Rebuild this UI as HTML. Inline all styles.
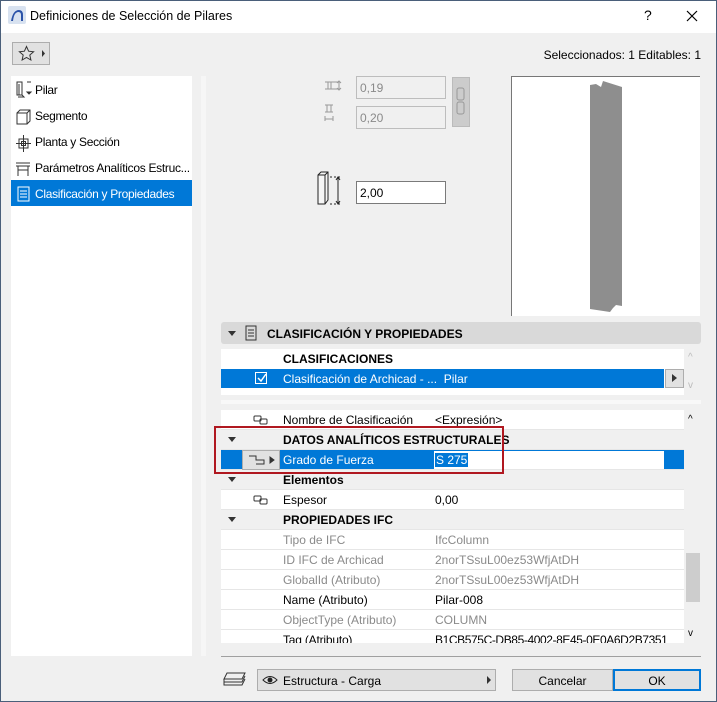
<!DOCTYPE html>
<html><head><meta charset="utf-8"><style>
*{box-sizing:border-box;margin:0;padding:0}
body{width:717px;height:702px;overflow:hidden;background:#f0f0f0;font-family:"Liberation Sans",sans-serif;font-size:12px;color:#000;position:relative}
.a{position:absolute}
.win{left:0;top:0;width:717px;height:702px;border:1px solid #4a5f7a}
.t{white-space:nowrap}
.row{position:absolute;left:221px;width:463px;height:20px;border-bottom:1px solid #e6e6e6;background:#fff}
.row .l{position:absolute;left:62px;top:3px}
.row .v{position:absolute;left:214px;top:3px}
.g{color:#8a8a8a}
.hdr{background:#f0f0f0;font-weight:bold}
.tri{position:absolute;left:7px;top:7px;width:0;height:0;border-left:4px solid transparent;border-right:4px solid transparent;border-top:5px solid #333}
.inp{position:absolute;height:23px;border:1px solid #bdbdbd;background:#f0f0f0;color:#8a8a8a;padding:4px 0 0 3px}
.item{position:absolute;left:11px;width:181px;height:26px;padding:7px 0 0 24px;letter-spacing:-0.3px;overflow:hidden}
</style></head><body>
<div class="a win"></div>
<div class="a" style="left:1px;top:1px;width:715px;height:32px;background:#fff"></div>
<svg class="a" style="left:8px;top:6px" width="18" height="18"><rect width="18" height="18" rx="2" fill="#d8e2f0"/><path d="M3 15 Q5 4 11 4 Q15 4 15 9 L15 15 L13 15 L13 9 Q13 6 10.5 6 Q6 6 5 15Z" fill="#2a52a8"/></svg>
<div class="a t" style="left:30px;top:9px;font-size:12.5px">Definiciones de Selección de Pilares</div>
<div class="a" style="left:644px;top:7px;font-size:14px">?</div>
<svg class="a" style="left:686px;top:10px" width="12" height="12"><path d="M1 1L11 11M11 1L1 11" stroke="#000" stroke-width="1.2"/></svg>
<div class="a" style="left:12px;top:42px;width:38px;height:23px;border:1px solid #adadad;background:#e1e1e1"></div>
<svg class="a" style="left:18px;top:45px" width="30" height="17"><path d="M8.5 1.5L10.6 6.2 15.6 6.7 11.8 10 12.9 15 8.5 12.4 4.1 15 5.2 10 1.4 6.7 6.4 6.2Z" fill="none" stroke="#333"/><path d="M24 5L27 8.5 24 12Z" fill="#333"/></svg>
<div class="a t" style="right:16px;top:48px">Seleccionados: 1 Editables: 1</div>

<div class="a" style="left:11px;top:76px;width:181px;height:580px;background:#fff"></div>
<div class="a" style="left:201px;top:76px;width:5px;height:580px;background:#f6f6f6"></div>
<div class="item t" style="top:76px">Pilar</div>
<div class="item t" style="top:102px">Segmento</div>
<div class="item t" style="top:128px">Planta y Sección</div>
<div class="item t" style="top:154px">Parámetros Analíticos Estruc...</div>
<div class="item t" style="top:180px;background:#0078d7;color:#fff">Clasificación y Propiedades</div>
<svg class="a" style="left:15px;top:80px" width="18" height="126" fill="none" stroke="#333">
<path d="M2 2H7V15H2ZM4 4V15M7 15L9 17H3"/><path d="M12 2H16M14 14L12 12H16Z" fill="#333"/>
<path d="M2 33H12V44H2ZM2 33L5 30H15V41L12 44M12 33L15 30"/>
<rect x="4" y="59" width="9" height="9"/><rect x="6.5" y="61.5" width="4" height="4"/><path d="M8.5 55V72M1 63.5H16"/>
<path d="M1 86H15M3 86V96M13 86V96M3 90H13M1 83H15"/>
<rect x="3" y="107" width="11" height="14" stroke="#fff"/><path d="M5 111H12M5 114H12M5 117H12" stroke="#fff"/>
</svg>

<svg class="a" style="left:322px;top:77px" width="30" height="50" fill="none" stroke="#999"><path d="M3 5H12M3 12H12M6 5V12M9 5V12M12 5H17M12 12H17"/><path d="M17 5V12M15 6L17 4 19 6M15 11L17 13 19 11"/><path d="M3 28H11M3 35H11M5 28V35M9 28V35M3 39V44M11 39V44M3 42H11"/></svg>
<div class="inp t" style="left:356px;top:76px;width:90px">0,19</div>
<div class="inp t" style="left:356px;top:106px;width:90px">0,20</div>
<div class="a" style="left:452px;top:77px;width:18px;height:50px;background:#ccc;border:1px solid #bbb"></div>
<svg class="a" style="left:456px;top:87px" width="10" height="30" fill="none" stroke="#999"><rect x="1" y="1" width="7" height="12" rx="2"/><rect x="1" y="15" width="7" height="12" rx="2"/></svg>
<svg class="a" style="left:316px;top:170px" width="34" height="36" fill="none" stroke="#222"><path d="M2 5L5 2H12V30L9 34H2ZM2 5H9V34M9 5L12 2" fill="#f6f6f6"/><path d="M14 7H24M14 34H24" stroke-dasharray="2 2"/><path d="M22 7V34M20 10L22 7 24 10M20 31L22 34 24 31"/></svg>
<div class="a t" style="left:356px;top:181px;width:90px;height:23px;border:1px solid #7a7a7a;background:#fff;padding:4px 0 0 3px">2,00</div>

<div class="a" style="left:511px;top:76px;width:189px;height:240px;background:#fff;border-top:1px solid #777;border-left:1px solid #777"></div>
<svg class="a" style="left:585px;top:78px" width="45" height="240"><path d="M5 7L11 6 16 9 18 3 37 9V228L31 227 28 230 25 234 5 231Z" fill="#8e8e8e"/></svg>

<div class="a" style="left:221px;top:322px;width:480px;height:22px;background:#d9d9d9;border-radius:3px"></div>
<div class="a" style="left:228px;top:331px;border-left:4px solid transparent;border-right:4px solid transparent;border-top:5px solid #333"></div>
<svg class="a" style="left:245px;top:325px" width="12" height="16" fill="none" stroke="#333"><rect x="1" y="1" width="10" height="14"/><path d="M3 5H9M3 8H9M3 11H9"/></svg>
<div class="a t" style="left:267px;top:327px;font-weight:bold">CLASIFICACIÓN Y PROPIEDADES</div>

<div class="a" style="left:221px;top:349px;width:463px;height:46px;background:#fff"></div>
<div class="a t" style="left:283px;top:352px;font-weight:bold">CLASIFICACIONES</div>
<div class="a" style="left:221px;top:369px;width:443px;height:19px;background:#0078d7"></div>
<div class="a" style="left:255px;top:372px;width:12px;height:12px;border:1px solid #fff"></div>
<svg class="a" style="left:256px;top:372px" width="12" height="12"><path d="M2 6L5 9 10 2" stroke="#fff" stroke-width="1.5" fill="none"/></svg>
<div class="a t" style="left:283px;top:372px;color:#fff">Clasificación de Archicad - ...&nbsp;&nbsp;Pilar</div>
<div class="a" style="left:665px;top:369px;width:19px;height:19px;background:#e1e1e1;border:1px solid #adadad"></div>
<div class="a" style="left:672px;top:374px;border-top:4px solid transparent;border-bottom:4px solid transparent;border-left:5px solid #333"></div>
<div class="a" style="left:688px;top:352px;color:#bbb;font-size:10px">^</div>
<div class="a" style="left:688px;top:380px;color:#bbb;font-size:10px">v</div>
<div class="a" style="left:221px;top:400px;width:480px;height:4px;background:#f8f8f8"></div>

<div class="a" style="left:221px;top:410px;width:463px;height:233px;background:#fff"></div>
<div class="row" style="top:410px"><svg class="a" style="left:32px;top:5px" width="16" height="10" fill="none" stroke="#333"><rect x="1" y="1" width="7" height="5" rx="1"/><rect x="7" y="4" width="7" height="5" rx="1"/></svg><span class="l t">Nombre de Clasificación</span><span class="v t">&lt;Expresión&gt;</span></div>
<div class="row hdr" style="top:430px"><i class="tri"></i><span class="l t">DATOS ANALÍTICOS ESTRUCTURALES</span></div>
<div class="row" style="top:450px;background:#0078d7;color:#fff"><div class="a" style="left:21px;top:0;width:38px;height:20px;background:#e1e1e1;border:1px solid #adadad"></div><svg class="a" style="left:27px;top:4px" width="28" height="12" fill="none" stroke="#333"><path d="M1 2H8V6H16V10H8"/><path d="M22 3L26 6 22 9Z" fill="#333"/></svg><span class="l t">Grado de Fuerza</span><div class="a" style="left:213px;top:1px;width:230px;height:18px;background:#fff"></div><span class="v t" style="background:#0078d7;color:#fff;padding:0 1px">S 275</span></div>
<div class="row hdr" style="top:470px"><i class="tri"></i><span class="l t">Elementos</span></div>
<div class="row" style="top:490px"><svg class="a" style="left:32px;top:5px" width="16" height="10" fill="none" stroke="#333"><rect x="1" y="1" width="7" height="5" rx="1"/><rect x="7" y="4" width="7" height="5" rx="1"/></svg><span class="l t">Espesor</span><span class="v t">0,00</span></div>
<div class="row hdr" style="top:510px"><i class="tri"></i><span class="l t">PROPIEDADES IFC</span></div>
<div class="row g" style="top:530px"><span class="l t">Tipo de IFC</span><span class="v t">IfcColumn</span></div>
<div class="row g" style="top:550px"><span class="l t">ID IFC de Archicad</span><span class="v t">2norTSsuL00ez53WfjAtDH</span></div>
<div class="row g" style="top:570px"><span class="l t">GlobalId (Atributo)</span><span class="v t">2norTSsuL00ez53WfjAtDH</span></div>
<div class="row" style="top:590px"><span class="l t">Name (Atributo)</span><span class="v t">Pilar-008</span></div>
<div class="row g" style="top:610px"><span class="l t">ObjectType (Atributo)</span><span class="v t">COLUMN</span></div>
<div class="row" style="top:630px;height:13px;overflow:hidden;border:0"><span class="l t" style="letter-spacing:-0.2px">Tag (Atributo)</span><span class="v t" style="letter-spacing:-0.4px">B1CB575C-DB85-4002-8E45-0E0A6D2B7351</span></div>
<div class="a" style="left:688px;top:414px;font-size:10px">^</div>
<div class="a" style="left:686px;top:553px;width:14px;height:49px;background:#cdcdcd"></div>
<div class="a" style="left:688px;top:628px;font-size:10px">v</div>
<div class="a" style="left:214px;top:426px;width:290px;height:48px;border:2px solid #b01820"></div>

<div class="a" style="left:221px;top:656px;width:480px;height:1px;background:#a0a0a0"></div>
<svg class="a" style="left:222px;top:671px" width="26" height="18" fill="none" stroke="#333"><path d="M5 2H23L20 8H2Z M2 8V11H20L23 5M2 11V14H20L23 8"/></svg>
<div class="a" style="left:257px;top:669px;width:239px;height:22px;background:#e1e1e1;border:1px solid #adadad"></div>
<svg class="a" style="left:262px;top:674px" width="16" height="12" fill="none" stroke="#222"><path d="M1 6Q8 -1 15 6Q8 13 1 6Z"/><circle cx="8" cy="6" r="2" fill="#222"/></svg>
<div class="a t" style="left:283px;top:674px">Estructura - Carga</div>
<div class="a" style="left:487px;top:676px;border-top:4px solid transparent;border-bottom:4px solid transparent;border-left:4px solid #333"></div>
<div class="a t" style="left:512px;top:669px;width:101px;height:22px;background:#e1e1e1;border:1px solid #adadad;text-align:center;padding-top:4px">Cancelar</div>
<div class="a t" style="left:613px;top:669px;width:88px;height:22px;background:#e1e1e1;border:2px solid #0078d7;text-align:center;padding-top:3px">OK</div>
</body></html>
